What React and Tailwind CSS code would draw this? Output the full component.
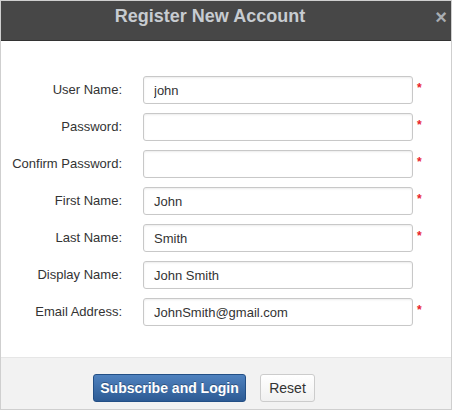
const fields = [
  { label: 'User Name:', value: 'john', required: true },
  { label: 'Password:', value: '', required: true, type: 'password' },
  { label: 'Confirm Password:', value: '', required: true, type: 'password' },
  { label: 'First Name:', value: 'John', required: true },
  { label: 'Last Name:', value: 'Smith', required: true },
  { label: 'Display Name:', value: 'John Smith', required: false },
  { label: 'Email Address:', value: 'JohnSmith@gmail.com', required: true },
];

export default function App() {
  return (
    <div
      className="w-[452px] h-[410px] bg-white border border-[#cfcfcf] flex flex-col overflow-hidden"
      style={{ fontFamily: '"Liberation Sans", Arial, sans-serif' }}
    >
      <div className="h-[40px] bg-[#474747] border-b border-[#333] flex items-center relative shrink-0">
        <div className="flex-1 text-center pr-[32px] text-[18px] font-bold text-[#c7ccd1] leading-none pb-[11px] pt-[2px]">
          Register New Account
        </div>
        <span className="absolute right-[4px] top-[6px] text-[20px] font-bold text-[#a9adb1] leading-none">×</span>
      </div>

      <div className="flex-1 pt-[35px]">
        <div className="flex flex-col gap-[9px]">
          {fields.map((f) => (
            <div key={f.label} className="flex items-center">
              <label className="w-[121px] text-right text-[13px] text-[#333]">{f.label}</label>
              <input
                type={f.type || 'text'}
                defaultValue={f.value}
                className="ml-[21px] w-[270px] h-[28px] border border-[#c8c8c8] rounded-[3px] px-[10px] text-[13px] text-[#333] bg-white shadow-[inset_0_1px_2px_rgba(0,0,0,0.08)] outline-none"
                style={{ fontFamily: '"Liberation Sans", Arial, sans-serif' }}
              />
              {f.required && (
                <span className="ml-[4px] self-start mt-[6px] text-[12px] font-bold text-[#e8212b] leading-none">*</span>
              )}
            </div>
          ))}
        </div>
      </div>

      <div className="h-[52px] bg-[#f2f2f2] border-t border-[#e6e6e6] flex items-start pt-[16px] shrink-0">
        <button className="ml-[92px] h-[28px] w-[153px] rounded-[3px] border border-[#234f85] bg-gradient-to-b from-[#4f82bf] to-[#2d5b94] text-white text-[14px] font-bold [text-shadow:0_-1px_0_rgba(0,0,0,0.3)]">
          Subscribe and Login
        </button>
        <button className="ml-[14px] h-[28px] w-[55px] rounded-[3px] border border-[#cccccc] bg-gradient-to-b from-white to-[#f0f0f0] text-[#333] text-[14px]">
          Reset
        </button>
      </div>
    </div>
  );
}
